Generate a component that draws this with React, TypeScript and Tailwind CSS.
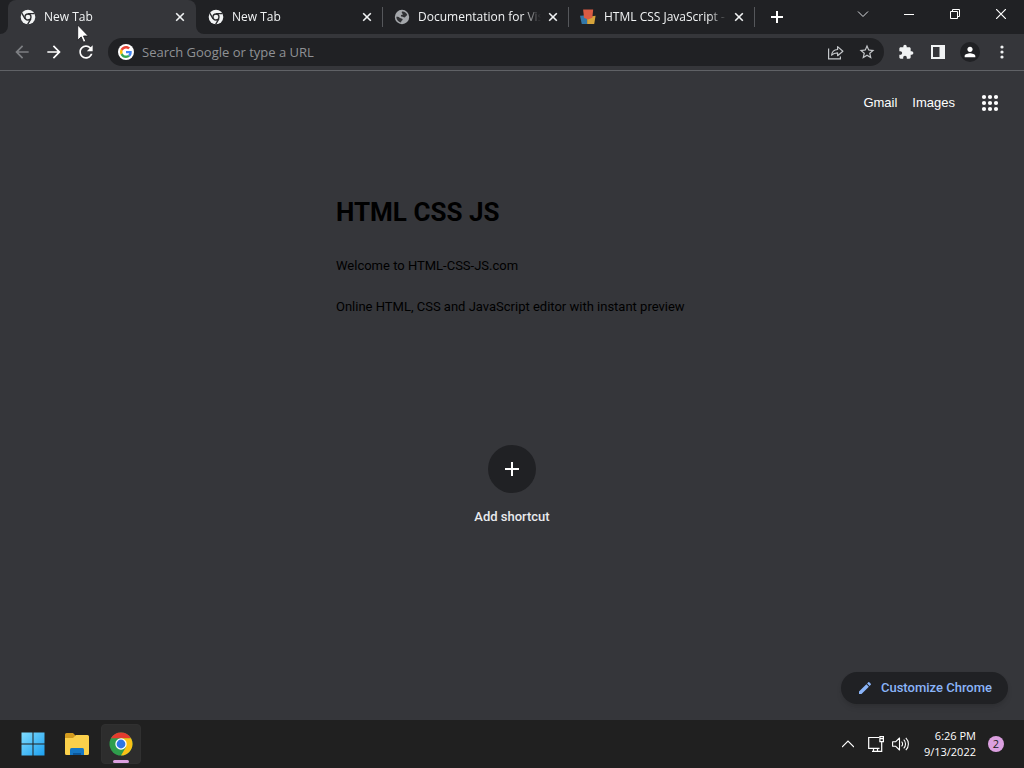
import React from "react";

type IconProps = { d: string; className?: string };

function Icon({ d, className = "size-5" }: IconProps) {
  return (
    <svg viewBox="0 0 24 24" fill="currentColor" className={className} aria-hidden="true">
      <path d={d} />
    </svg>
  );
}

const BACK = "M20 11H7.83l5.59-5.59L12 4l-8 8 8 8 1.41-1.41L7.83 13H20v-2z";
const FORWARD = "M12 4l-1.41 1.41L16.17 11H4v2h12.17l-5.58 5.59L12 20l8-8z";
const REFRESH =
  "M17.65 6.35C16.2 4.9 14.21 4 12 4c-4.42 0-7.99 3.58-7.99 8s3.57 8 7.99 8c3.73 0 6.84-2.55 7.73-6h-2.08c-.82 2.33-3.04 4-5.65 4-3.31 0-6-2.69-6-6s2.69-6 6-6c1.66 0 3.14.69 4.22 1.78L13 11h7V4l-2.35 2.35z";
const EXTENSION =
  "M20.5 11H19V7c0-1.1-.9-2-2-2h-4V3.5C13 2.12 11.88 1 10.5 1S8 2.12 8 3.5V5H4c-1.1 0-1.99.9-1.99 2v3.8H3.5c1.49 0 2.7 1.21 2.7 2.7s-1.21 2.7-2.7 2.7H2V20c0 1.1.9 2 2 2h3.8v-1.5c0-1.49 1.21-2.7 2.7-2.7 1.49 0 2.7 1.21 2.7 2.7V22H17c1.1 0 2-.9 2-2v-4h1.5c1.38 0 2.5-1.12 2.5-2.5S21.88 11 20.5 11z";
const STAR =
  "M22 9.24l-7.19-.62L12 2 9.19 8.63 2 9.24l5.46 4.73L5.82 21 12 17.27 18.18 21l-1.63-7.03L22 9.24zM12 15.4l-3.76 2.27 1-4.28-3.32-2.88 4.38-.38L12 6.1l1.71 4.04 4.38.38-3.32 2.88 1 4.28L12 15.4z";
const PERSON =
  "M12 12c2.21 0 4-1.79 4-4s-1.79-4-4-4-4 1.79-4 4 1.79 4 4 4zm0 2c-2.67 0-8 1.34-8 4v2h16v-2c0-2.66-5.33-4-8-4z";
const EDIT =
  "M3 17.25V21h3.75L17.81 9.94l-3.75-3.75L3 17.25zM20.71 7.04c.39-.39.39-1.02 0-1.41l-2.34-2.34c-.39-.39-1.02-.39-1.41 0l-1.83 1.83 3.75 3.75 1.83-1.83z";

function ChromeMono() {
  return (
    <svg viewBox="0 0 16 16" className="size-4 shrink-0" aria-hidden="true">
      <circle cx="8" cy="8" r="7.3" fill="#f1f3f4" />
      <circle cx="8" cy="8" r="3" fill="none" stroke="#292a2d" strokeWidth="1.3" />
      <path d="M8 4.6h6.6M5.1 9.8L1.8 4.1M10.9 9.8L7.6 15.4" stroke="#292a2d" strokeWidth="1.3" />
    </svg>
  );
}

function Globe() {
  return (
    <svg viewBox="0 0 16 16" className="size-4 shrink-0" aria-hidden="true">
      <circle cx="8" cy="8" r="7.2" fill="#a4a7ab" />
      <path d="M8.2 2.600c2.300-.2 4.200 1.200 5 3.100-.3 1.200-1.300 1.100-1.700 2-.4.800-1.600.9-2.300.3-.7-.5-1.900-.2-2.300-1.100-.3-.8.700-1 1.500-1.200.9-.3.200-1-.3-1.500-.5-.6-.5-1.200.1-1.600z" fill="#303134" />
      <path d="M2.300 7.800c1.500-.3 2.700.3 3.700 1.100.8.600 2.300.3 2.600 1.300.3.800-.5 1.200-1.100 1.700-.5.500-.2 1.300-.6 1.700-2.600-.5-4.600-2.900-4.600-5.800z" fill="#303134" />
    </svg>
  );
}

function BlocksLogo() {
  return (
    <svg viewBox="0 0 18 18" className="size-4 shrink-0" aria-hidden="true">
      <path d="M0 7.500l8-.5v10H2z" fill="#3277a8" />
      <path d="M8 9l9.500-1.500-1.500 9.500H8z" fill="#d6a43b" />
      <path d="M3.500.500h11.300l-.9 9.300-4.900 2-4.500-2z" fill="#d95b43" />
    </svg>
  );
}

function GoogleLogo() {
  return (
    <svg viewBox="0 0 48 48" className="size-3" aria-hidden="true">
      <path fill="#EA4335" d="M24 9.500c3.540 0 6.710 1.220 9.210 3.600l6.850-6.850C35.900 2.380 30.470 0 24 0 14.620 0 6.510 5.380 2.560 13.220l7.980 6.190C12.430 13.720 17.740 9.500 24 9.500z" />
      <path fill="#4285F4" d="M46.980 24.550c0-1.570-.15-3.090-.38-4.550H24v9.020h12.940c-.58 2.960-2.260 5.480-4.780 7.180l7.730 6c4.510-4.180 7.090-10.360 7.090-17.650z" />
      <path fill="#FBBC05" d="M10.530 28.590c-.48-1.450-.76-2.990-.76-4.590s.27-3.140.76-4.590l-7.980-6.190C.92 16.460 0 20.120 0 24c0 3.880.92 7.540 2.560 10.780l7.970-6.190z" />
      <path fill="#34A853" d="M24 48c6.480 0 11.930-2.130 15.890-5.810l-7.730-6c-2.150 1.450-4.920 2.300-8.160 2.300-6.260 0-11.570-4.220-13.470-9.910l-7.980 6.190C6.510 42.620 14.620 48 24 48z" />
    </svg>
  );
}

function ChromeLogo() {
  return (
    <svg viewBox="0 0 24 24" className="size-6" aria-hidden="true">
      <circle cx="12" cy="12" r="11.500" fill="#2f9e4c" />
      <path d="M12 12L2 6.300A11.500 11.500 0 0 1 22 6.300H12z" fill="#e33b2e" />
      <path d="M2 6.300l5 8.600L12 12V6.300z" fill="#2f9e4c" />
      <path d="M12 6.300h10A11.500 11.500 0 0 1 12 23.500l5-8.600z" fill="#fbc116" />
      <circle cx="12" cy="12" r="5.700" fill="#fff" />
      <circle cx="12" cy="12" r="4.400" fill="#2f75e4" />
    </svg>
  );
}

function Close() {
  return (
    <svg viewBox="0 0 16 16" className="size-4" fill="none" stroke="#f1f3f4" strokeWidth="1.600" aria-hidden="true">
      <path d="M4.200 4.200l7.600 7.600M11.800 4.200l-7.600 7.600" />
    </svg>
  );
}

type TabProps = { title: string; icon: React.ReactNode; active?: boolean; divider?: boolean };

function Tab({ title, icon, active, divider }: TabProps) {
  return (
    <div
      className={
        active
          ? "relative flex h-full min-w-0 max-w-[188px] flex-1 items-center rounded-t-lg bg-[#35363a] pr-2 pl-3"
          : "relative flex h-full min-w-0 max-w-[186px] flex-1 items-center pr-[7px] pl-3"
      }
    >
      {active && (
        <>
          <span className="absolute bottom-0 -left-2 size-2 bg-[#35363a]"><span className="block size-2 rounded-br-lg bg-[#202124]" /></span>
          <span className="absolute -right-2 bottom-0 size-2 bg-[#35363a]"><span className="block size-2 rounded-bl-lg bg-[#202124]" /></span>
        </>
      )}
      <button role="tab" aria-selected={!!active} className="flex min-w-0 flex-1 items-center gap-2 text-left">
        {icon}
        <span className="min-w-0 flex-1 overflow-hidden mask-r-from-85% whitespace-nowrap">{title}</span>
      </button>
      <button aria-label={"Close " + title} className="ml-1 shrink-0">
        <Close />
      </button>
      {divider && <span className="absolute -right-px h-5 w-px bg-[#55575b]" />}
    </div>
  );
}

function TitleBar() {
  return (
    <header className="flex h-[34px] bg-[#202124] pl-2 font-['Open_Sans','Noto_Sans',sans-serif] text-xs text-[#f1f3f4]">
      <div role="tablist" className="flex min-w-0 flex-1">
        <Tab title="New Tab" icon={<ChromeMono />} active />
        <Tab title="New Tab" icon={<ChromeMono />} divider />
        <Tab title="Documentation for Visu" icon={<Globe />} divider />
        <Tab title="HTML CSS JavaScript -" icon={<BlocksLogo />} divider />
        <button aria-label="New tab" className="flex w-[46px] shrink-0 items-center justify-center">
          <svg viewBox="0 0 12 12" className="size-3" stroke="#fff" strokeWidth="2" aria-hidden="true">
            <path d="M6 0v12M0 6h12" />
          </svg>
        </button>
      </div>
      <div className="flex h-7 shrink-0">
        <button aria-label="Search tabs" className="flex w-[46px] items-center justify-center">
          <svg viewBox="0 0 12 12" className="size-3" fill="none" stroke="#dadce0" aria-hidden="true">
            <path d="M1 3.500l5 5 5-5" />
          </svg>
        </button>
        <button aria-label="Minimize" className="flex w-[46px] items-center justify-center">
          <svg viewBox="0 0 10 10" className="size-[10px]" stroke="#fff" aria-hidden="true">
            <path d="M0 5.500h10" />
          </svg>
        </button>
        <button aria-label="Restore" className="flex w-[46px] items-center justify-center">
          <svg viewBox="0 0 10 10" className="size-[10px]" fill="none" stroke="#fff" aria-hidden="true">
            <path d="M.5 2.500h7v7h-7zM2.500 2.500v-2h7v7h-2" />
          </svg>
        </button>
        <button aria-label="Close window" className="flex w-[46px] items-center justify-center">
          <svg viewBox="0 0 10 10" className="size-[10px]" stroke="#fff" strokeWidth="1.200" aria-hidden="true">
            <path d="M0 0l10 10M10 0L0 10" />
          </svg>
        </button>
      </div>
    </header>
  );
}

function Toolbar() {
  return (
    <nav className="flex h-[37px] items-center border-b border-[#606266] bg-[#35363a] px-3 text-white">
      <div className="flex gap-3">
        <button aria-label="Back" className="text-[#7d7f83]"><Icon d={BACK} /></button>
        <button aria-label="Forward"><Icon d={FORWARD} /></button>
        <button aria-label="Reload"><Icon d={REFRESH} /></button>
      </div>
      <div className="ml-3 flex h-7 min-w-0 flex-1 items-center rounded-full bg-[#202124] pr-2 pl-[10px]">
        <span className="flex size-4 shrink-0 items-center justify-center rounded-full bg-white"><GoogleLogo /></span>
        <input
          aria-label="Address and search bar"
          placeholder="Search Google or type a URL"
          className="ml-2 min-w-0 flex-1 bg-transparent font-['Open_Sans','Noto_Sans',sans-serif] text-[13px] leading-5 text-white outline-none placeholder:text-[#8f9195]"
        />
        <div className="flex items-center gap-[14px] text-[#c4c7ca]">
          <button aria-label="Share">
            <svg viewBox="0 0 16 16" className="size-4" fill="none" stroke="currentColor" strokeWidth="1.200" aria-hidden="true">
              <path d="M.6 4.500v10.400h11.800v-2.500" />
              <path d="M3.600 11.200c.3-3.400 2.500-5.500 6-5.700V2.600l5.300 4.600-5.300 4.500V8.800c-2.600 0-4.500.7-6 2.400z" strokeLinejoin="round" />
            </svg>
          </button>
          <button aria-label="Bookmark this tab"><Icon d={STAR} className="size-[18px]" /></button>
        </div>
      </div>
      <div className="ml-3 flex items-center gap-3 text-[#f1f3f4]">
        <button aria-label="Extensions" className="flex size-5 items-center justify-center"><Icon d={EXTENSION} className="size-4" /></button>
        <button aria-label="Side panel" className="flex size-5 items-center justify-center">
          <svg viewBox="0 0 14 14" className="size-[14px]" fill="currentColor" aria-hidden="true">
            <path fillRule="evenodd" d="M0 0h14v14H0zM2 2v10h6.500V2z" />
          </svg>
        </button>
        <button aria-label="Profile" className="flex size-5 items-center justify-center rounded-full bg-[#202124] text-white"><Icon d={PERSON} className="size-4" /></button>
        <button aria-label="Menu" className="flex w-5 justify-center">
          <svg viewBox="0 0 4 14" className="h-[14px] w-1" fill="currentColor" aria-hidden="true">
            <circle cx="2" cy="2" r="1.600" /><circle cx="2" cy="7" r="1.600" /><circle cx="2" cy="12" r="1.600" />
          </svg>
        </button>
      </div>
    </nav>
  );
}

const DOTS = [3, 9, 15];

function NewTabPage() {
  return (
    <main className="flex flex-1 flex-col bg-[#35363a] font-[Roboto,sans-serif] text-[13px] leading-5 text-[#e8eaed]">
      <div className="flex h-16 items-center justify-end pr-[25px] font-['Liberation_Sans',Arial,sans-serif] text-white">
        <a href="#gmail" className="mr-[15px]">Gmail</a>
        <a href="#images" className="mr-[26px]">Images</a>
        <button aria-label="Google apps">
          <svg viewBox="0 0 18 18" className="size-[18px]" fill="currentColor" aria-hidden="true">
            {DOTS.map((y) => DOTS.map((x) => <circle key={x + "-" + y} cx={x} cy={y} r="2.100" />))}
          </svg>
        </button>
      </div>
      <section className="mx-auto mt-[61px] w-[352px] text-black">
        <h1 className="text-[26px] leading-8 font-bold">HTML CSS JS</h1>
        <p className="mt-7">Welcome to HTML-CSS-JS.com</p>
        <p className="mt-[21px] whitespace-nowrap">Online HTML, CSS and JavaScript editor with instant preview</p>
      </section>
      <button className="mx-auto mt-32 flex flex-col items-center font-medium">
        <span className="flex size-12 items-center justify-center rounded-full bg-[#202124]">
          <svg viewBox="0 0 14 14" className="size-[14px]" stroke="#fff" strokeWidth="2" aria-hidden="true">
            <path d="M7 0v14M0 7h14" />
          </svg>
        </span>
        <span className="mt-[14px]">Add shortcut</span>
      </button>
      <button className="mt-auto mr-4 mb-4 flex h-8 items-center gap-2 self-end rounded-full bg-[#202124] px-4 font-medium text-[#8ab4f8] shadow-md">
        <Icon d={EDIT} className="size-4" />
        Customize Chrome
      </button>
    </main>
  );
}

function Taskbar() {
  return (
    <footer className="flex h-12 items-center bg-[#202020] pr-5 pl-[13px] font-['Open_Sans','Noto_Sans',sans-serif] text-white">
      <div className="flex gap-1">
        <button aria-label="Start" className="flex size-10 items-center justify-center">
          <svg viewBox="0 0 24 24" className="size-6" aria-hidden="true">
            <defs>
              <linearGradient id="win" x2="1" y2="1">
                <stop offset="0" stopColor="#7fdcff" /><stop offset="1" stopColor="#1ca0f0" />
              </linearGradient>
            </defs>
            <path d="M.5.5h11v11H.5zM12.500.5h11v11h-11zM.5 12.500h11v11H.5zM12.500 12.500h11v11h-11z" fill="url(#win)" />
          </svg>
        </button>
        <button aria-label="File Explorer" className="flex size-10 items-center justify-center">
          <svg viewBox="0 0 24 22" className="h-[22px] w-6" aria-hidden="true">
            <path d="M0 1.500A1.500 1.500 0 0 1 1.500 0H8l3 3v4H0z" fill="#d39b1f" />
            <path d="M0 5h8l3-3h11.500A1.500 1.500 0 0 1 24 3.500v17a1.500 1.500 0 0 1-1.500 1.500h-21A1.500 1.500 0 0 1 0 20.500z" fill="#fbd04b" />
            <path d="M5 22v-5.500A1.500 1.500 0 0 1 6.500 15h11a1.500 1.500 0 0 1 1.500 1.500V22z" fill="#1677c5" />
            <path d="M8 22v-2h8v2z" fill="#0b579b" />
          </svg>
        </button>
        <button aria-label="Google Chrome" className="relative flex size-10 items-center justify-center rounded-sm border border-[#303030] bg-[#2d2d2d]">
          <ChromeLogo />
          <span className="absolute bottom-0 h-[3px] w-4 rounded-full bg-[#dca0e0]" />
        </button>
      </div>
      <div className="ml-auto flex items-center">
        <button aria-label="Show hidden icons">
          <svg viewBox="0 0 12 12" className="size-3" fill="none" stroke="#fff" strokeWidth="1.200" aria-hidden="true">
            <path d="M0 9l6-6 6 6" />
          </svg>
        </button>
        <button aria-label="Network" className="ml-[14px]">
          <svg viewBox="0 0 16 16" className="size-4" fill="none" stroke="#fff" strokeWidth="1.200" aria-hidden="true">
            <path d="M11 1.500H.7v10.800h10.800M4 15.300h7.500M5.500 12.500v2.500M9.500 12.500v2.500M13.700 6v9.300h-3" />
            <path d="M11.900.6h3.500v5h-3.500zM12 2.600h3.400" />
          </svg>
        </button>
        <button aria-label="Volume" className="ml-2">
          <svg viewBox="0 0 17 16" className="h-4 w-[17px]" fill="none" stroke="#fff" strokeWidth="1.100" aria-hidden="true">
            <path d="M.6 5.800h2.900L7.500 2v12l-4-3.800H.6z" strokeLinejoin="round" />
            <path d="M9.600 5.700a3.200 3.200 0 0 1 0 4.600M11.700 3.700a6 6 0 0 1 0 8.600M13.800 1.800a8.700 8.700 0 0 1 0 12.400" />
          </svg>
        </button>
        <time className="ml-[15px] text-right text-[11px] leading-4">
          <span className="block">6:26 PM</span>
          <span className="block">9/13/2022</span>
        </time>
        <button aria-label="Notifications" className="ml-3 flex size-4 items-center justify-center rounded-full bg-[#dca0e0] text-[11px] text-[#202020]">2</button>
      </div>
    </footer>
  );
}

function Cursor() {
  return (
    <svg viewBox="0 0 12 19" className="pointer-events-none absolute top-6 left-[77px] h-[19px] w-3" aria-hidden="true">
      <path d="M.7 1v15.200l3.500-3.300 2.300 5.300 2.300-1-2.300-5.200h4.800z" fill="#fff" stroke="#16171a" strokeWidth=".8" />
    </svg>
  );
}

export default function App() {
  return (
    <div className="relative flex min-h-screen flex-col">
      <TitleBar />
      <Toolbar />
      <NewTabPage />
      <Taskbar />
      <Cursor />
    </div>
  );
}
